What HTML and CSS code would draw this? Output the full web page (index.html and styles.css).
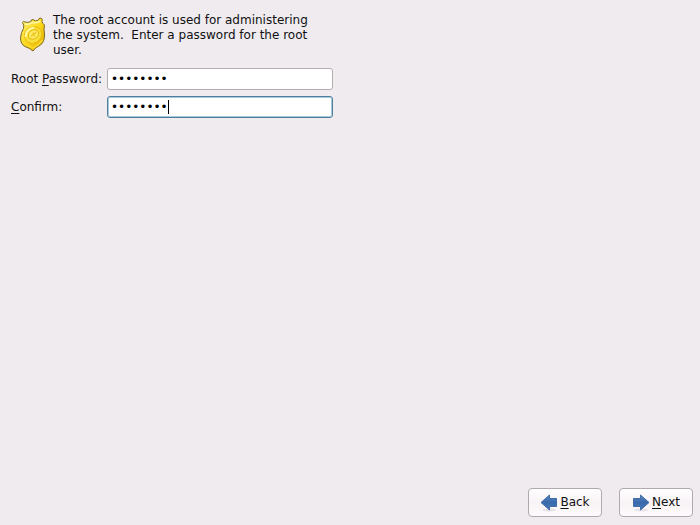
FILE: index.html
```html
<!DOCTYPE html>
<html lang="en">
<head>
<meta charset="utf-8">
<title>Root Password</title>
<link rel="stylesheet" href="styles.css">
</head>
<body>
<form class="screen">
  <main class="content">
    <div class="intro">
      <svg class="badge" viewBox="0 0 28 36" aria-hidden="true">
        <defs>
          <linearGradient id="gold" x1="0" y1="0" x2="1" y2="1">
            <stop offset="0" stop-color="#fff27a"/>
            <stop offset=".5" stop-color="#fbd91c"/>
            <stop offset="1" stop-color="#dba400"/>
          </linearGradient>
        </defs>
        <path d="M3.500 5.500 Q4 3.500 6 5 Q9 6 12 4.500 Q12 2 14 2.500 Q16 4.500 19 3.500 Q19.500 1 22 1 Q24 2 23 4.500 Q23.500 6.500 25.500 8 Q24.500 12 25.500 17 Q26 24 21.500 28 Q16 30.500 14 34 Q10.500 31 6 29.500 Q1.500 27 1.500 21 Q2 15 4.500 11.500 Q5.500 8 3.500 5.500Z" fill="url(#gold)" stroke="#7d6c22" stroke-linejoin="round"/>
        <path d="M6 7 Q10 8 13 5.500 Q17 6.500 21.500 4" fill="none" stroke="#fff7a8" stroke-width="1.500"/>
        <ellipse cx="14" cy="18" rx="9" ry="8" transform="rotate(-35 14 18)" fill="#fae03a" stroke="#ecbd12"/>
        <path d="M6.500 20 Q7 12 15 10.500" fill="none" stroke="#fff9a0" stroke-width="2"/>
        <ellipse cx="14.500" cy="17.500" rx="5.500" ry="4.500" transform="rotate(-35 14.500 17.500)" fill="#fdea62" stroke="#e6b814"/>
        <path d="M12 19 L17.500 15.500 M14 15.500 L15.500 19.500" stroke="#ecc020" stroke-width="1.200"/>
        <path d="M4 25 Q9 29 14 31 Q20 28 23.500 23" fill="none" stroke="#ffd92c" stroke-width="1.500"/>
      </svg>
      <p class="message">The root account is used for administering the system.&nbsp; Enter a password for the root user.</p>
    </div>
    <div class="fields">
      <label for="password">Root <u>P</u>assword:</label>
      <div class="field"><input id="password" type="password" value="password"></div>
      <label for="confirm"><u>C</u>onfirm:</label>
      <div class="field active"><input id="confirm" type="password" value="password"><span class="caret"></span></div>
    </div>
  </main>
  <footer class="actions">
    <button type="button">
      <svg class="arrow" viewBox="0 0 18 20" aria-hidden="true">
        <defs>
          <linearGradient id="blue" x1="0" y1="0" x2="0" y2="1">
            <stop offset="0" stop-color="#5b87bd"/>
            <stop offset=".5" stop-color="#3869ac"/>
            <stop offset="1" stop-color="#4779b8"/>
          </linearGradient>
        </defs>
        <ellipse cx="9" cy="17" rx="7" ry="1.500" fill="#e6e2e6"/>
        <path d="M1 9.500 L9.500 2 V5.500 H16.500 V13.500 H9.500 V17Z" fill="url(#blue)" stroke="#3f6ca6" stroke-linejoin="round"/>
      </svg>
      <span><u>B</u>ack</span>
    </button>
    <button type="button">
      <svg class="arrow" viewBox="0 0 18 20" aria-hidden="true">
        <ellipse cx="9" cy="17" rx="7" ry="1.500" fill="#e6e2e6"/>
        <path d="M17 9.500 L8.500 2 V5.500 H1.500 V13.500 H8.500 V17Z" fill="url(#blue)" stroke="#3f6ca6" stroke-linejoin="round"/>
      </svg>
      <span><u>N</u>ext</span>
    </button>
  </footer>
</form>
</body>
</html>
```
FILE: styles.css
```css
* {
  box-sizing: border-box;
}

body {
  margin: 0;
  background: #efebef;
  color: #111;
  font: 12px/15px "DejaVu Sans", sans-serif;
}

.screen {
  display: flex;
  flex-direction: column;
  justify-content: space-between;
  min-height: 100vh;
}

.content {
  padding: 13px 11px;
}

.intro {
  display: flex;
  gap: 6px;
  padding-left: 8px;
}

.badge {
  flex: none;
  width: 28px;
  height: 36px;
  margin-top: 4px;
}

.message {
  max-width: 265px;
  margin: 0;
}

.fields {
  display: grid;
  grid-template-columns: 90px minmax(0, 226px);
  align-items: center;
  gap: 6px;
  margin-top: 10px;
}

label {
  white-space: nowrap;
}

u {
  text-underline-offset: 2px;
}

.field {
  position: relative;
  height: 22px;
}

.field input {
  display: block;
  width: 100%;
  height: 100%;
  padding: 0 3px;
  border: 1px solid #b5adb0;
  border-radius: 3px;
  background: #fff;
  color: #000;
  font: inherit;
  outline: none;
}

.active input {
  border-color: #4f7f9f;
  box-shadow: inset 0 0 0 1px #a9c8da;
}

.caret {
  position: absolute;
  top: 4px;
  bottom: 4px;
  left: 61px;
  width: 1px;
  background: #000;
}

.actions {
  display: flex;
  justify-content: flex-end;
  gap: 17px;
  padding: 8px 7px;
}

button {
  display: flex;
  align-items: center;
  justify-content: center;
  gap: 2px;
  width: 74px;
  height: 29px;
  padding: 0;
  border: 1px solid #b0a9ae;
  border-radius: 4px;
  background: linear-gradient(#fff, #f8f3f6 50%, #fdfbfc);
  color: #111;
  font: inherit;
}

.arrow {
  width: 18px;
  height: 20px;
}
```
